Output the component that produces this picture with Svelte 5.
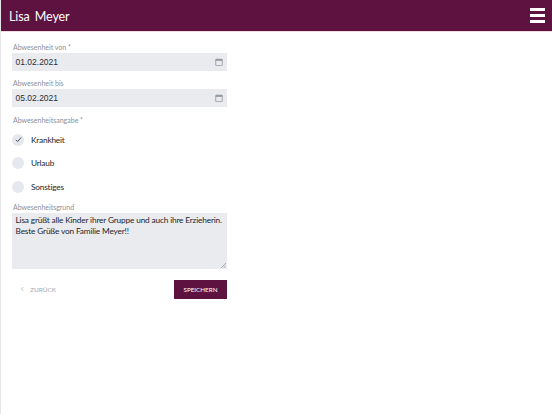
<script>
  const options = [
    { label: 'Krankheit', checked: true },
    { label: 'Urlaub', checked: false },
    { label: 'Sonstiges', checked: false }
  ];
</script>

<div class="page">
  <header class="bar">
    <h1>Lisa Meyer</h1>
    <div class="burger"><span></span><span></span><span></span></div>
  </header>
  <main class="form">
    <div class="label first">Abwesenheit von *</div>
    <div class="input">
      <span>01.02.2021</span>
      <svg viewBox="0 0 10 10" width="8" height="8"><path d="M1.5 1.500h7a.6.6 0 0 1 .6.6v6.800a.6.6 0 0 1-.6.6h-7a.6.6 0 0 1-.6-.6V2.100a.6.6 0 0 1 .6-.6z" fill="none" stroke="#8d939c"/><rect x="1" y="1.500" width="8" height="2" fill="#8d939c"/></svg>
    </div>
    <div class="label">Abwesenheit bis</div>
    <div class="input">
      <span>05.02.2021</span>
      <svg viewBox="0 0 10 10" width="8" height="8"><path d="M1.5 1.500h7a.6.6 0 0 1 .6.6v6.800a.6.6 0 0 1-.6.6h-7a.6.6 0 0 1-.6-.6V2.100a.6.6 0 0 1 .6-.6z" fill="none" stroke="#8d939c"/><rect x="1" y="1.500" width="8" height="2" fill="#8d939c"/></svg>
    </div>
    <div class="label">Abwesenheitsangabe *</div>
    <div class="options">
      {#each options as o}
        <div class="option">
          <span class="radio">
            {#if o.checked}
              <svg viewBox="0 0 12 12" width="7" height="7"><path d="M1.500 6.500l3 3 6-7" fill="none" stroke="#333a44" stroke-width="1.500"/></svg>
            {/if}
          </span>
          <span>{o.label}</span>
        </div>
      {/each}
    </div>
    <div class="label reason">Abwesenheitsgrund</div>
    <div class="textarea">
      Lisa grüßt alle Kinder ihrer Gruppe und auch ihre Erzieherin.<br />Beste Grüße von Familie Meyer!!
      <svg class="grip" viewBox="0 0 6 6" width="5" height="5"><path d="M0 6L6 0M3 6L6 3" stroke="#8a8d94" stroke-width=".8"/></svg>
    </div>
    <div class="actions">
      <div class="back">
        <svg viewBox="0 0 6 8" width="4" height="6"><path d="M5 1L2 4l3 3" fill="none" stroke="#a4a9b1" stroke-width="1"/></svg>
        <span>ZURÜCK</span>
      </div>
      <div class="save">SPEICHERN</div>
    </div>
  </main>
</div>

<style>
  :global(body) { margin: 0; background: #fff; }
  .page {
    width: 552px; height: 414px; overflow: hidden; box-sizing: border-box;
    border-left: 1px solid #e6e6e8;
    font-family: Lato, "Noto Sans", sans-serif; color: #2c2f36;
  }
  .bar {
    height: 31px; background: #5e1240; border-bottom: 1px solid #f3dbe6;
    margin-left: -1px; padding: 0 7px 0 9px;
    display: flex; align-items: center; justify-content: space-between;
  }
  h1 { margin: 2px 0 0; font-size: 12.500px; font-weight: 400; color: #fff; word-spacing: 2px; letter-spacing: -0.1px; }
  .burger { display: flex; flex-direction: column; gap: 3px; }
  .burger span { display: block; width: 15px; height: 3px; background: #fff; }
  .form { width: 215px; margin-left: 11px; padding-top: 9.500px; }
  .label { font-size: 7px; line-height: 11px; color: #8a909a; height: 11px; margin-top: 7.500px; padding-left: 1px; }
  .label.first { margin-top: 0; }
  .input {
    height: 18px; background: #e9ebef; padding: 0 4px 0 3.500px;
    display: flex; align-items: center; justify-content: space-between;
    font: 8.500px "Liberation Sans", sans-serif; color: #2c2f36;
  }
  .options { padding-top: 2.500px; }
  .option { display: flex; align-items: center; gap: 7px; height: 23.500px; font-size: 8.300px; letter-spacing: -0.2px; color: #23262c; }
  .radio { width: 12px; height: 12px; border-radius: 50%; background: #e6e8ee; display: flex; align-items: center; justify-content: center; }
  .label.reason { margin-top: 3.500px; }
  .textarea {
    position: relative; box-sizing: border-box; height: 56px; background: #e9ebef; padding: 2px 3.500px;
    font-size: 8.300px; letter-spacing: -0.17px; line-height: 11.500px; color: #23262c; margin-top: -0.500px; white-space: nowrap;
  }
  .grip { position: absolute; right: 1px; bottom: 1px; }
  .actions { display: flex; align-items: center; justify-content: space-between; margin-top: 11px; }
  .back { display: flex; align-items: center; gap: 6px; padding-left: 8px; font-size: 6.500px; color: #a4a9b1; }
  .save {
    width: 53px; height: 19px; background: #5e1240; color: #fff; font-size: 6.300px;
    display: flex; align-items: center; justify-content: center;
  }
</style>
